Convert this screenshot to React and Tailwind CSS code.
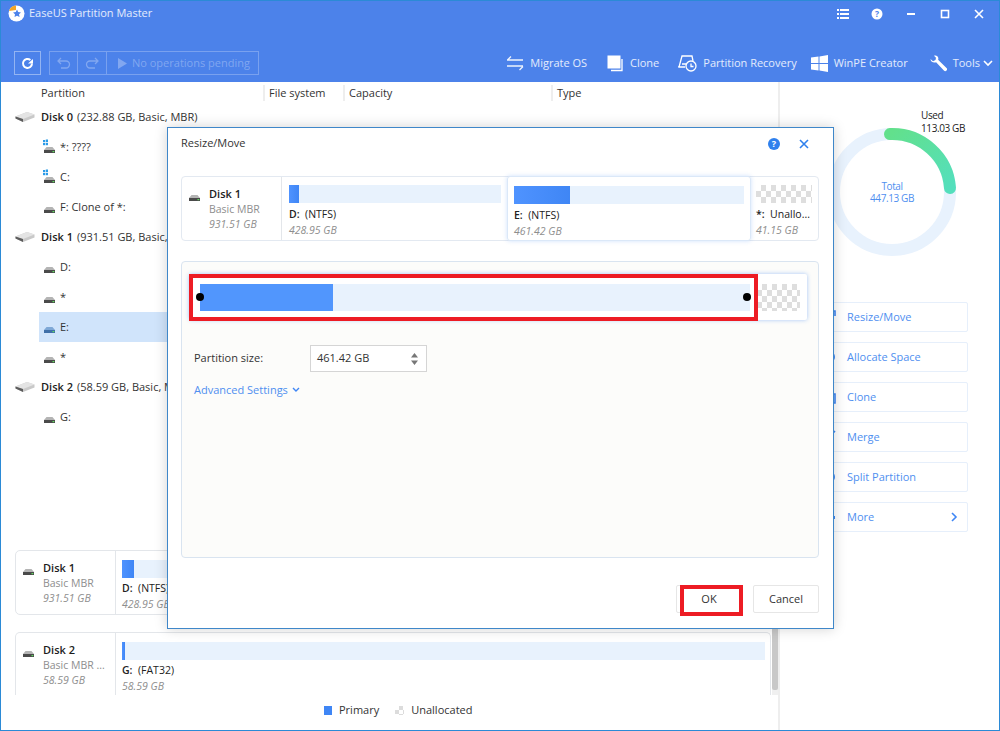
import React from "react";

const F = { fontFamily: '"Open Sans","Noto Sans",sans-serif' };
const checker = "bg-[conic-gradient(#dedede_25%,#ffffff_0_50%,#dedede_0_75%,#ffffff_0)] bg-[length:10px_12px]";

function Hdd({ blue, win }) {
  return (
    <svg width="18" height="16" viewBox="0 0 18 16" className="shrink-0">
      {win && (
        <g fill="#2b9be8">
          <rect x="2" y="1" width="2.2" height="2.2" />
          <rect x="4.8" y="0.5" width="2.2" height="2.7" />
          <rect x="2" y="4" width="2.2" height="2.2" />
          <rect x="4.8" y="4" width="2.2" height="2.2" />
        </g>
      )}
      <path d="M5.500 8h6l2.500 3H3z" fill={blue ? "#7fa8d6" : "#b4b4b4"} />
      <rect x="3" y="11" width="11" height="3" fill={blue ? "#3f6fa8" : "#4a4a4a"} />
      <rect x="11.500" y="12" width="1.800" height="1.200" fill="#5fdc5f" />
    </svg>
  );
}

function BigDisk() {
  return (
    <svg width="20" height="12" viewBox="0 0 20 12" className="shrink-0">
      <path d="M0.5 5.5 L12 1 L19.5 3.5 L19.5 6.5 L8 11 L0.5 7.5z" fill="#c9c9c9" />
      <path d="M0.5 5.5 L12 1 L19.5 3.5 L8 8z" fill="#e4e4e4" />
      <path d="M0.5 5.5 L8 8 L8 11 L0.5 7.5z" fill="#5c5c5c" />
    </svg>
  );
}

function DiskRow({ name, rest }) {
  return (
    <div className="h-[30px] flex items-center pl-[14px] text-[11px] whitespace-nowrap">
      <BigDisk />
      <span className="ml-[6px] font-semibold text-[#1c1c1c]">{name}</span>
      <span className="ml-[4px] text-[#333]">{rest}</span>
    </div>
  );
}

function PartRow({ label, win, selected }) {
  return (
    <div className={`h-[30px] flex items-center ml-[38px] pl-[2px] text-[11px] text-[#333] ${selected ? "bg-[#d0e4fb]" : ""}`}>
      <Hdd win={win} blue={selected} />
      <span className="ml-[1px]">{label}</span>
    </div>
  );
}

function Bar({ fill }) {
  return (
    <div className="h-[18px] bg-[#e8f2fd]">
      <div className="h-full bg-gradient-to-r from-[#4f93ff] to-[#3f86f5]" style={{ width: fill }} />
    </div>
  );
}

function DiskCell({ name, sub, size }) {
  return (
    <div className="w-[100px] shrink-0 flex border-r border-[#e3e6ea] pl-[4px] pt-[9px] h-full">
      <div className="mt-[1px]"><Hdd /></div>
      <div className="ml-[5px] text-[10.5px] leading-[14.5px]">
        <div className="text-[11px] leading-[16px] font-semibold text-[#1c1c1c]">{name}</div>
        <div className="text-[#8e8e8e] whitespace-nowrap">{sub}</div>
        <div className="text-[#8e8e8e] italic">{size}</div>
      </div>
    </div>
  );
}

function PartLabel({ a, b, size, top = "mt-[3px]" }) {
  return (
    <>
      <div className={`${top} text-[10.5px] leading-[15px] text-[#222] whitespace-nowrap`}>
        <span className="font-semibold">{a}</span>&nbsp;&nbsp;{b}
      </div>
      <div className="mt-[1px] text-[10.5px] leading-[15px] italic text-[#8e8e8e]">{size}</div>
    </>
  );
}

function ToolItem({ icon, label, className }) {
  return (
    <div className={`flex items-center text-white/85 text-[11px] whitespace-nowrap ${className}`}>
      {icon}
      <span className="ml-[6px]">{label}</span>
    </div>
  );
}

function ActionBtn({ icon, label, arrow }) {
  return (
    <div className="h-[30px] rounded-[2px] border border-[#e6effb] flex items-center pl-[7px] text-[11px] text-[#4f8ff0]">
      <span className="w-[25px] shrink-0 flex">{icon}</span>
      <span>{label}</span>
      {arrow && (
        <svg width="8" height="10" viewBox="0 0 8 10" className="ml-auto mr-[9px]">
          <path d="M2 1l4 4-4 4" fill="none" stroke="#3f86f5" strokeWidth="1.6" />
        </svg>
      )}
    </div>
  );
}

const ic = { fill: "none", stroke: "#3f86f5", strokeWidth: 1.6 };

export default function App() {
  return (
    <div style={F} className="relative w-[1000px] h-[731px] overflow-hidden bg-white border border-[#2b8ad6] flex flex-col">
      {/* header */}
      <header className="h-[81px] shrink-0 bg-[#4c82ea] flex flex-col">
        <div className="h-[25px] flex items-center pl-[7px] pr-[14px]">
          <svg width="17" height="17" viewBox="0 0 17 17">
            <circle cx="8.5" cy="8.5" r="8" fill="#fff" />
            <path d="M1 6A8 8 0 0 1 8 0.5L8 5z" fill="#f5a623" />
            <path d="M9 4.5l1.2 2.6 2.8.3-2 1.9.6 2.8-2.6-1.4-2.5 1.4.5-2.8-2-1.9 2.8-.3z" fill="#4c82ea" />
          </svg>
          <span className="ml-[4px] text-[11px] text-white/85">EaseUS Partition Master</span>
          <div className="ml-auto flex items-center gap-[22px] text-white">
            <svg width="12" height="10" viewBox="0 0 12 10" fill="#fff"><path d="M0 0h2v2H0zM3 0h9v2H3zM0 4h2v2H0zM3 4h9v2H3zM0 8h2v2H0zM3 8h9v2H3z" /></svg>
            <svg width="12" height="12" viewBox="0 0 12 12"><circle cx="6" cy="6" r="5.5" fill="#fff" /><text x="6" y="9" textAnchor="middle" fontSize="8.5" fontWeight="700" fill="#4c82ea">?</text></svg>
            <svg width="12" height="12" viewBox="0 0 12 12"><path d="M2 6h8" stroke="#fff" strokeWidth="2" /></svg>
            <svg width="12" height="12" viewBox="0 0 12 12"><rect x="2.5" y="2.5" width="7" height="7" fill="none" stroke="#fff" strokeWidth="1.6" /></svg>
            <svg width="12" height="12" viewBox="0 0 12 12"><path d="M2 2l8 8M10 2l-8 8" stroke="#fff" strokeWidth="1.6" /></svg>
          </div>
        </div>
        <div className="mt-[25px] flex items-center pl-[13px] h-[24px]">
          <div className="w-[27px] h-[24px] border border-white/40 flex items-center justify-center">
            <svg width="13" height="13" viewBox="0 0 13 13"><path d="M11 6.5A4.5 4.5 0 1 1 9.4 3" fill="none" stroke="#fff" strokeWidth="2" /><path d="M7 5.5h5V1z" fill="#fff" transform="translate(0 1)" /></svg>
          </div>
          <div className="ml-[8px] h-[24px] w-[210px] border border-white/25 flex items-center text-[11px] text-white/30">
            <div className="w-[28px] h-full border-r border-white/25 flex items-center justify-center">
              <svg width="14" height="12" viewBox="0 0 14 12"><path d="M4 1L1 4l3 3M1 4h8a3.5 3.5 0 0 1 0 7H4" fill="none" stroke="#fff" strokeOpacity=".3" strokeWidth="1.3" /></svg>
            </div>
            <div className="w-[29px] h-full border-r border-white/25 flex items-center justify-center">
              <svg width="14" height="12" viewBox="0 0 14 12"><path d="M10 1l3 3-3 3M13 4H5a3.5 3.5 0 0 0 0 7h5" fill="none" stroke="#fff" strokeOpacity=".3" strokeWidth="1.3" /></svg>
            </div>
            <svg width="9" height="11" viewBox="0 0 9 11" className="ml-[11px]"><path d="M0 0l9 5.5L0 11z" fill="#fff" fillOpacity=".3" /></svg>
            <span className="ml-[5px] whitespace-nowrap">No operations pending</span>
          </div>
          <div className="ml-auto flex items-center pr-[6px]">
            <ToolItem className="mr-[20px]" label="Migrate OS" icon={
              <svg width="17" height="15" viewBox="0 0 17 15" fill="none" stroke="#fff" strokeOpacity=".9" strokeWidth="1.3"><path d="M0 4h16M4 0.5L0.5 4M0 10h16M12.5 14L16 10.5" /></svg>} />
            <ToolItem className="mr-[19px]" label="Clone" icon={
              <svg width="17" height="17" viewBox="0 0 17 17"><rect x="0.5" y="0.5" width="13" height="13" fill="#fff" /><path d="M15 4v11.5H4" fill="none" stroke="#fff" strokeWidth="1.3" /></svg>} />
            <ToolItem className="mr-[14px]" label="Partition Recovery" icon={
              <svg width="19" height="18" viewBox="0 0 19 18" fill="none" stroke="#fff" strokeWidth="1.3"><path d="M7 13H1l3-11h10l1 5" /><path d="M1 13v-1M4 10h4" /><circle cx="13" cy="12" r="5" /><path d="M13 9.5V12.5H15.5" /></svg>} />
            <ToolItem className="mr-[22px]" label="WinPE Creator" icon={
              <svg width="17" height="17" viewBox="0 0 17 17" fill="#fff"><path d="M0 2.5l7.5-1V8H0zM8.5 1.4L17 0v8H8.5zM0 9h7.5v6.5l-7.500-1zM8.5 9H17v8l-8.500-1.400z" /></svg>} />
            <ToolItem label="Tools" icon={
              <svg width="17" height="17" viewBox="0 0 17 17"><path d="M0.5 4L3 6.2 5.5 5 6 2.8 4 .8C6 0 8 1 8.300 3c.1.800 0 1.300-.2 1.800L16.500 13a1.700 1.700 0 0 1-2.600 2.600L6.100 7.200C4 8 .6 7.300.5 4z" fill="#fff" /></svg>} />
            <svg width="10" height="7" viewBox="0 0 10 7" className="ml-[3px]"><path d="M1 1l4 4 4-4" fill="none" stroke="#fff" strokeWidth="1.6" /></svg>
          </div>
        </div>
      </header>

      <div className="flex-1 flex min-h-0">
        {/* main */}
        <main className="w-[779px] shrink-0 border-r-2 border-[#eeeeee] flex flex-col">
          <div className="h-[20px] pt-[2px] flex items-center text-[11px] text-[#333]">
            <div className="w-[262px] pl-[40px]">Partition</div>
            <div className="w-[80px] pl-[4px] border-l-2 border-[#eee]">File system</div>
            <div className="w-[208px] pl-[4px] border-l-2 border-[#eee]">Capacity</div>
            <div className="pl-[4px] border-l-2 border-[#eee]">Type</div>
          </div>
          <DiskRow name="Disk 0" rest="(232.88 GB, Basic, MBR)" />
          <PartRow label="*: ????" win />
          <PartRow label="C:" win />
          <PartRow label="F: Clone of *:" />
          <DiskRow name="Disk 1" rest="(931.51 GB, Basic, MBR)" />
          <PartRow label="D:" />
          <PartRow label="*" />
          <PartRow label="E:" selected />
          <PartRow label="*" />
          <DiskRow name="Disk 2" rest="(58.59 GB, Basic, MBR)" />
          <PartRow label="G:" />

          <div className="mt-[118px] flex pl-[14px]">
            <div className="w-[757px] flex flex-col gap-[17px]">
              <div className="h-[65px] rounded-[5px] border border-[#e3e6ea] flex">
                <DiskCell name="Disk 1" sub="Basic MBR" size="931.51 GB" />
                <div className="flex-1 pt-[9px] pl-[6px] pr-[5px]">
                  <Bar fill="12px" />
                  <PartLabel a="D:" b="(NTFS)" size="428.95 GB" />
                </div>
              </div>
              <div className="h-[63px] rounded-t-[5px] border border-b-0 border-[#e3e6ea] flex">
                <DiskCell name="Disk 2" sub="Basic MBR ..." size="58.59 GB" />
                <div className="flex-1 pt-[9px] pl-[6px] pr-[5px]">
                  <Bar fill="3px" />
                  <PartLabel a="G:" b="(FAT32)" size="58.59 GB" />
                </div>
              </div>
            </div>
            <div className="ml-[1px] w-[6px] h-[145px] bg-[#f0f0f0]">
              <div className="h-[140px] bg-[#c8c8c8] rounded-b-[2px]" />
            </div>
          </div>

          <div className="mt-[7px] flex items-center text-[11px] text-[#333] pl-[323px]">
            <span className="w-[8px] h-[9px] bg-[#3f86f5]" />
            <span className="ml-[7px]">Primary</span>
            <span className="ml-[16px] w-[9px] h-[9px] bg-[conic-gradient(#dcdcdc_25%,#ffffff_0_50%,#dcdcdc_0_75%,#ffffff_0)] bg-[length:8px_8px]" />
            <span className="ml-[7px]">Unallocated</span>
          </div>
        </main>

        {/* right */}
        <aside className="flex-1 flex flex-col pl-[34px] pr-[31px]">
          <div className="relative h-[220px] shrink-0">
            <svg width="132" height="132" viewBox="0 0 132 132" className="absolute left-[12px] top-[44px]">
              <defs>
                <linearGradient id="arc" x1="0" y1="0" x2="1" y2="1">
                  <stop offset="0" stopColor="#62e08c" />
                  <stop offset="1" stopColor="#54dfbc" />
                </linearGradient>
              </defs>
              <circle cx="66" cy="66" r="58" fill="none" stroke="#e8f2fd" strokeWidth="12" />
              <path d="M64 8A58 58 0 0 1 124 62" fill="none" stroke="url(#arc)" strokeWidth="12" strokeLinecap="round" />
            </svg>
            <div className="absolute left-[42px] w-[72px] top-[98px] text-center text-[10px] tracking-[-0.4px] leading-[12px] text-[#4f8ff0]">
              <div>Total</div>
              <div>447.13 GB</div>
            </div>
            <div className="absolute left-[107px] top-[27px] text-[10px] tracking-[-0.4px] leading-[13px] text-[#222] whitespace-nowrap">
              <div>Used</div>
              <div>113.03 GB</div>
            </div>
          </div>
          <div className="flex flex-col gap-[10px]">
            <ActionBtn label="Resize/Move" icon={<svg width="14" height="14" viewBox="0 0 14 14" {...ic}><path d="M1 3h10v10H1zM8 1h5v5" /></svg>} />
            <ActionBtn label="Allocate Space" icon={<svg width="14" height="14" viewBox="0 0 14 14"><circle cx="7" cy="7" r="6" fill="#3f86f5" /></svg>} />
            <ActionBtn label="Clone" icon={<svg width="14" height="14" viewBox="0 0 14 14" {...ic}><path d="M4 4h9v9H4zM7 4V1H1" /></svg>} />
            <ActionBtn label="Merge" icon={<svg width="14" height="14" viewBox="0 0 14 14" {...ic}><path d="M1 1l6 6 6-6M7 7v6" /></svg>} />
            <ActionBtn label="Split Partition" icon={<svg width="14" height="14" viewBox="0 0 14 14"><circle cx="7" cy="7" r="6" fill="#3f86f5" /></svg>} />
            <ActionBtn label="More" arrow icon={<svg width="14" height="14" viewBox="0 0 14 14" fill="#3f86f5"><path d="M0 6h3v3H0zM5 6h3v3H5zM10 6h3v3h-3z" /></svg>} />
          </div>
        </aside>
      </div>

      {/* modal */}
      <div className="absolute left-[166px] top-[126px] w-[667px] h-[502px] bg-white border border-[#3f87c9] shadow-[0_0_12px_rgba(0,0,0,0.18)] flex flex-col pl-[13px] pr-[14px]">
        <div className="h-[31px] flex items-center text-[11px] text-[#333]">
          <span>Resize/Move</span>
          <svg width="12" height="12" viewBox="0 0 12 12" className="ml-auto"><circle cx="6" cy="6" r="6" fill="#2f80ed" /><text x="6" y="9.2" textAnchor="middle" fontSize="9" fontWeight="700" fill="#fff">?</text></svg>
          <svg width="10" height="10" viewBox="0 0 10 10" className="ml-[19px] mr-[10px]"><path d="M1 1l8 8M9 1L1 9" stroke="#2f80ed" strokeWidth="1.6" /></svg>
        </div>

        <div className="mt-[17px] h-[65px] rounded-[4px] border border-[#e3e9f1] flex relative">
          <DiskCell name="Disk 1" sub="Basic MBR" size="931.51 GB" />
          <div className="w-[225px] pt-[8px] pl-[7px] pr-[6px]">
            <Bar fill="10px" />
            <PartLabel top="mt-[4px]" a="D:" b="(NTFS)" size="428.95 GB" />
          </div>
          <div className="w-[244px] -my-px pt-[9px] px-[6px] rounded-[3px] border border-[#dbe8f8] shadow-[0_0_4px_rgba(63,134,245,0.25)]">
            <Bar fill="56px" />
            <PartLabel top="mt-[4px]" a="E:" b="(NTFS)" size="461.42 GB" />
          </div>
          <div className="flex-1 pt-[8px] pl-[5px] pr-[6px]">
            <div className={`h-[18px] ${checker}`} />
            <PartLabel top="mt-[4px]" a="*:" b="Unallo..." size="41.15 GB" />
          </div>
        </div>

        <div className="mt-[20px] h-[297px] rounded-[4px] border border-[#d9e4f0] bg-[#fcfcfa] flex flex-col px-[11px]">
          <div className="relative mt-[12px] ml-[-4px] h-[46px] w-[618px] bg-white rounded-[2px] shadow-[0_0_4px_rgba(63,134,245,0.45)] flex items-center pl-[11px] pr-[7px]">
            <div className="w-[550px] h-[27px] bg-[#e8f2fd] shrink-0">
              <div className="h-full w-[133px] bg-[#5196fd]" />
            </div>
            <div className={`ml-[7px] flex-1 h-[27px] ${checker}`} />
            <div className="absolute left-0 top-0 w-[569px] h-[47px] border-[4px] border-[#ed1c24]" />
            <span className="absolute left-[7px] top-[19px] w-[8px] h-[8px] rounded-full bg-black" />
            <span className="absolute left-[554px] top-[19px] w-[8px] h-[8px] rounded-full bg-black" />
          </div>

          <div className="mt-[25px] flex items-center text-[11px] text-[#333]">
            <span className="w-[117px] pl-[1px]">Partition size:</span>
            <div className="w-[117px] h-[27px] border border-[#d5d5d5] bg-white flex items-center pl-[6px] pr-[8px] text-[#333]">
              <span>461.42 GB</span>
              <svg width="7" height="12" viewBox="0 0 7 12" className="ml-auto" fill="#777"><path d="M3.500 0L7 4.500H0zM3.500 12L0 7.500h7z" /></svg>
            </div>
          </div>
          <div className="mt-[10px] flex items-center text-[11px] text-[#4f8ff0] pl-[1px]">
            <span>Advanced Settings</span>
            <svg width="8" height="6" viewBox="0 0 8 6" className="ml-[4px]"><path d="M1 1l3 3 3-3" fill="none" stroke="#3f86f5" strokeWidth="1.400" /></svg>
          </div>
        </div>

        <div className="mt-[27px] flex justify-end items-start text-[11px] text-[#333]">
          <div className="relative w-[66px] h-[28px] border border-[#e6e6e6] rounded-[2px] flex items-center justify-center">
            OK
            <div className="absolute left-[3px] -top-px w-[63px] h-[31px] border-[4px] border-[#ed1c24]" />
          </div>
          <div className="ml-[11px] w-[66px] h-[28px] border border-[#e6e6e6] rounded-[2px] flex items-center justify-center">Cancel</div>
        </div>
      </div>
    </div>
  );
}
